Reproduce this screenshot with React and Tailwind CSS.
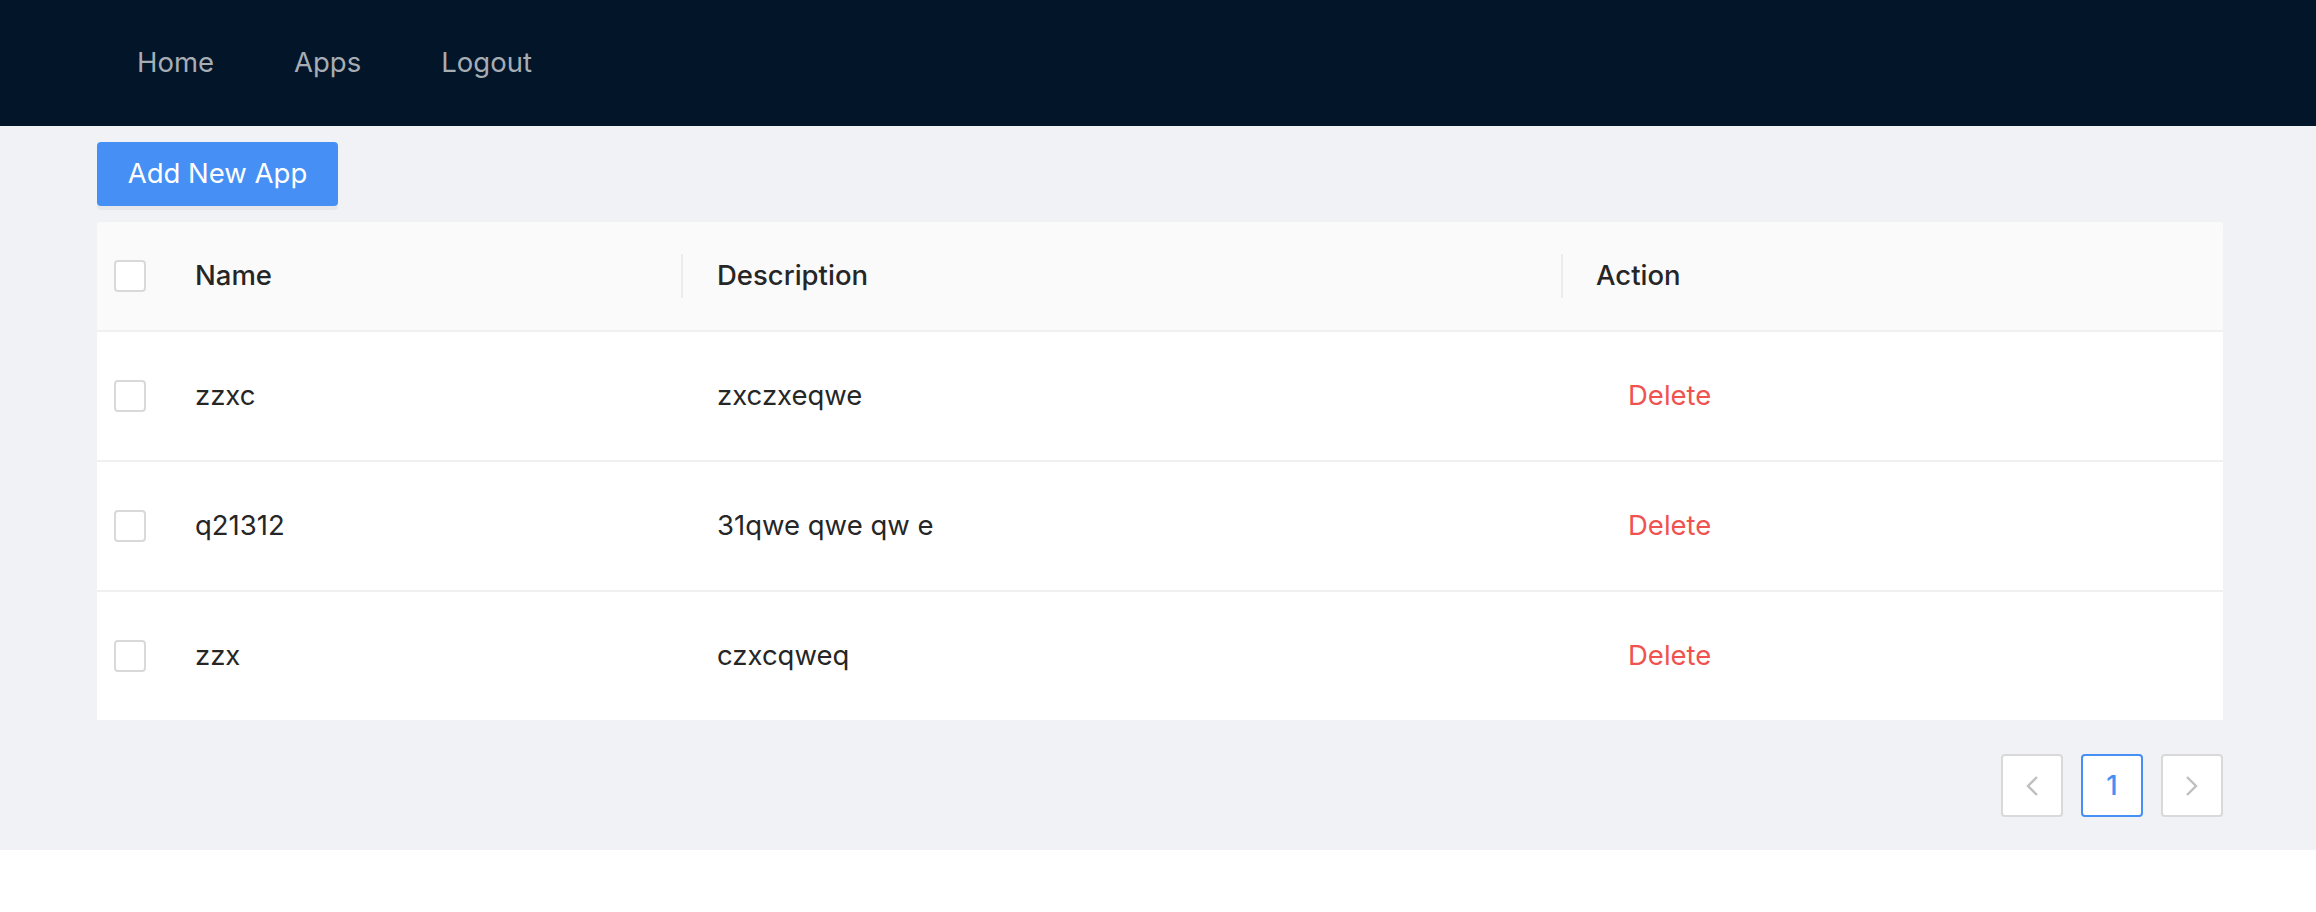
import React from "react";

const apps = [
    { name: "zzxc", description: "zxczxeqwe" },
    { name: "q21312", description: "31qwe qwe qw e" },
    { name: "zzx", description: "czxcqweq" },
];

const Checkbox = () => (
    <span className="block w-[32px] h-[32px] rounded-[4px] border-2 border-[#d9d9d9] bg-white" />
);

const Chevron = ({ dir }) => (
    <svg width="14" height="22" viewBox="0 0 14 22" fill="none">
        <polyline
            points={dir === "left" ? "12,2 3,11 12,20" : "2,2 11,11 2,20"}
            stroke="#bfbfbf"
            strokeWidth="2.4"
            strokeLinejoin="miter"
        />
    </svg>
);

const App = () => {
    return (
        <div className="min-h-screen bg-white font-['Inter','Liberation_Sans',sans-serif] text-[27.5px] text-[#262626]">
            {/* Top Nav */}
            <header className="h-[126px] bg-[#031529] flex items-center pl-[97px]">
                {["Home", "Apps", "Logout"].map((item) => (
                    <a key={item} className="px-[40px] text-[#a6adb4] leading-none cursor-pointer">
                        {item}
                    </a>
                ))}
            </header>

            {/* Content */}
            <main className="bg-[#f0f2f5] pl-[97px] pr-[93px] pt-[16px] pb-[33px]">
                <button className="w-[241px] h-[64px] rounded-[4px] bg-[#4690f5] text-white shadow-[0_4px_0_rgba(0,0,0,0.045)]">
                    Add New App
                </button>

                {/* Table */}
                <div className="mt-[16px] bg-white rounded-t-[4px]">
                    <div className="grid grid-cols-[66px_520px_880px_1fr] h-[110px] bg-[#fafafa] border-b-2 border-[#f0f0f0] rounded-t-[4px] font-medium">
                        <div className="flex items-center justify-center">
                            <Checkbox />
                        </div>
                        <div className="relative flex items-center px-[32px]">
                            Name
                            <span className="absolute right-0 top-1/2 -translate-y-1/2 w-[2px] h-[44px] bg-[#ececec]" />
                        </div>
                        <div className="relative flex items-center px-[34px]">
                            Description
                            <span className="absolute right-0 top-1/2 -translate-y-1/2 w-[2px] h-[44px] bg-[#ececec]" />
                        </div>
                        <div className="flex items-center px-[33px]">Action</div>
                    </div>

                    {apps.map((app, i) => (
                        <div
                            key={app.name}
                            className={`grid grid-cols-[66px_520px_880px_1fr] ${
                                i < apps.length - 1 ? "h-[130px] border-b-2 border-[#f0f0f0]" : "h-[128px]"
                            }`}
                        >
                            <div className="flex items-center justify-center">
                                <Checkbox />
                            </div>
                            <div className="flex items-center px-[32px]">{app.name}</div>
                            <div className="flex items-center px-[34px]">{app.description}</div>
                            <div className="flex items-center px-[32px]">
                                <button className="h-[64px] px-[33px] text-[#f0524f]">Delete</button>
                            </div>
                        </div>
                    ))}
                </div>

                {/* Pagination */}
                <div className="flex justify-end gap-[18px] mt-[34px]">
                    <button className="w-[62px] h-[63px] flex items-center justify-center bg-white border-2 border-[#d9d9d9] rounded-[4px]">
                        <Chevron dir="left" />
                    </button>
                    <button className="w-[62px] h-[63px] flex items-center justify-center bg-white border-2 border-[#4690f5] rounded-[4px] text-[#4690f5] font-medium">
                        1
                    </button>
                    <button className="w-[62px] h-[63px] flex items-center justify-center bg-white border-2 border-[#d9d9d9] rounded-[4px]">
                        <Chevron dir="right" />
                    </button>
                </div>
            </main>
        </div>
    );
};

export default App;
